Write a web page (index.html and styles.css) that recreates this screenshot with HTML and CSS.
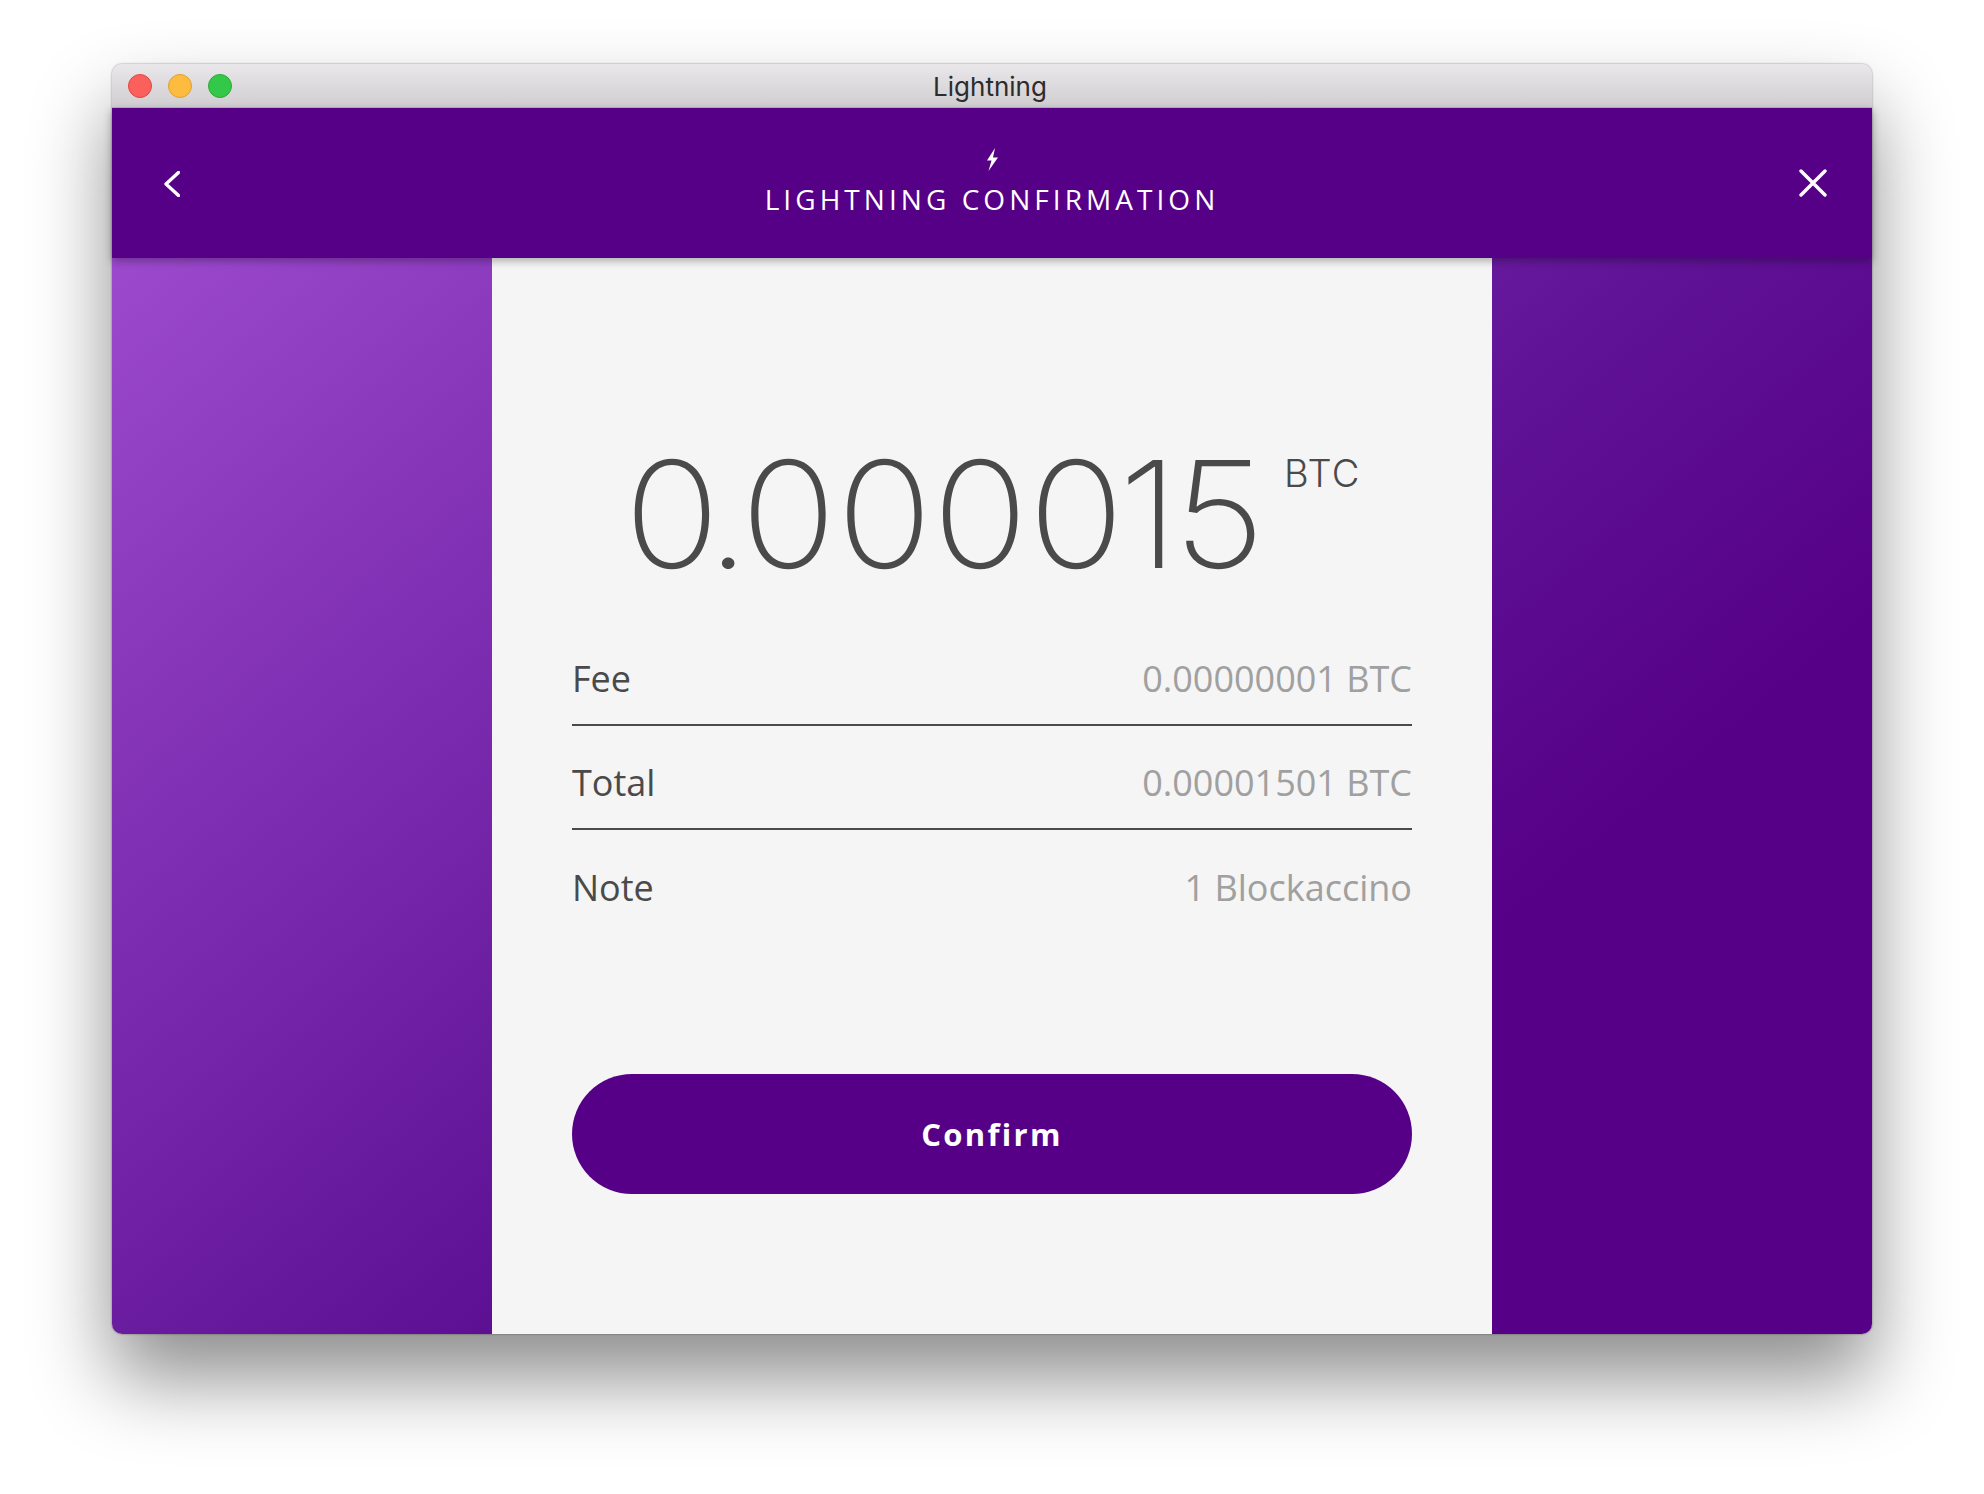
FILE: index.html
```html
<!DOCTYPE html>
<html lang="en">
<head>
    <meta charset="UTF-8">
    <title>Lightning</title>
    <link rel="stylesheet" href="styles.css">
</head>
<body>
    <div class="window">
        <div class="titlebar">
            <div class="lights">
                <span class="light red"></span>
                <span class="light yellow"></span>
                <span class="light green"></span>
            </div>
            <div class="window-title">Lightning</div>
        </div>

        <div class="navbar">
            <svg class="back-icon" width="16" height="26" viewBox="0 0 16 26">
                <path d="M14.5 1.5 L2 13 L14.5 24.5" />
            </svg>
            <div class="message">
                <svg class="bolt" width="12" height="23" viewBox="0 0 12 23">
                    <path d="M9 0 L1 12.5 H5.5 L2.5 23 L12 9.5 H7 Z" />
                </svg>
                <h1>LIGHTNING CONFIRMATION</h1>
            </div>
            <svg class="close-icon" width="28" height="28" viewBox="0 0 28 28">
                <path d="M2 2 L26 26 M26 2 L2 26" />
            </svg>
        </div>

        <div class="content">
            <div class="panel">
                <div class="amount">
                    <span class="value"><span class="tight-dot">0.</span>000<span class="tight-one">01</span>5</span>
                    <span class="unit">BTC</span>
                </div>
                <div class="rows">
                    <div class="row">
                        <span class="label">Fee</span>
                        <span class="data">0.00000001 BTC</span>
                    </div>
                    <div class="row">
                        <span class="label">Total</span>
                        <span class="data">0.00001501 BTC</span>
                    </div>
                    <div class="row">
                        <span class="label">Note</span>
                        <span class="data">1 Blockaccino</span>
                    </div>
                </div>
                <button class="confirm">Confirm</button>
            </div>
        </div>
    </div>
</body>
</html>
```

FILE: styles.css
```css
body {
    margin: 0;
    background-color: #ffffff;
    height: 1494px;
    overflow: hidden;
    padding: 64px 112px 0;
    box-sizing: border-box;
}

.window {
    width: 1760px;
    height: 1270px;
    border-radius: 10px;
    display: flex;
    flex-direction: column;
    box-shadow: 0 44px 80px rgba(0, 0, 0, 0.45), 0 0 2px rgba(0, 0, 0, 0.5);
}

.titlebar {
    height: 43px;
    flex-shrink: 0;
    display: flex;
    align-items: center;
    position: relative;
    border-radius: 10px 10px 0 0;
    border-bottom: 1px solid #b8b6b8;
    background-image: linear-gradient(to bottom, #e9e7e9 0%, #d0ced0 100%);
}

.lights {
    display: flex;
    gap: 16px;
    padding-left: 16px;
}

.light {
    width: 24px;
    height: 24px;
    border-radius: 50%;
    box-sizing: border-box;
}

.red {
    background-color: #fc605c;
    border: 1px solid #e2463f;
}

.yellow {
    background-color: #fdbc40;
    border: 1px solid #e1a029;
}

.green {
    background-color: #34c84a;
    border: 1px solid #2aac2f;
}

.window-title {
    position: absolute;
    left: 0;
    right: 4px;
    padding-top: 2px;
    text-align: center;
    font-family: "Inter", sans-serif;
    font-size: 26px;
    color: #2d2b2d;
}

.navbar {
    height: 150px;
    flex-shrink: 0;
    display: flex;
    align-items: center;
    justify-content: space-between;
    padding: 0 45px 0 52px;
    background-color: #560087;
    position: relative;
    z-index: 1;
    box-shadow: 0 3px 8px rgba(0, 0, 0, 0.3);
}

.back-icon {
    margin-top: 2px;
}

.back-icon path,
.close-icon path {
    fill: none;
    stroke: #ffffff;
    stroke-width: 3.4;
    stroke-linecap: round;
    stroke-linejoin: round;
}

.bolt path {
    fill: #ffffff;
}

.message {
    text-align: center;
    flex-grow: 1;
    margin-left: 5px;
    padding-bottom: 2px;
    color: #ffffff;
}

.bolt {
    display: block;
    margin: 0 auto 10px;
}

.message h1 {
    margin: 0;
    font-family: "Open Sans", sans-serif;
    font-size: 28px;
    font-weight: 400;
    line-height: 36px;
    letter-spacing: 4.05px;
}

.content {
    flex: 1;
    display: flex;
    justify-content: center;
    overflow: hidden;
    border-radius: 0 0 10px 10px;
    background-image: linear-gradient(140deg, #9c49cd 0%, #5f1295 52%, #560087 72%);
}

.panel {
    width: 1000px;
    box-sizing: border-box;
    padding: 0 80px;
    background-color: #f5f5f5;
}

.amount {
    display: flex;
    justify-content: center;
    align-items: flex-start;
    gap: 63px;
    padding-top: 183px;
    color: #4a4a4a;
    font-family: "Inter", sans-serif;
}

.value {
    font-size: 148px;
    font-weight: 200;
    line-height: 148px;
    transform: scaleX(1.073);
    transform-origin: left center;
}

.tight-dot {
    letter-spacing: -9px;
}

.tight-one {
    letter-spacing: -5.3px;
}

.unit {
    margin-top: 10px;
    font-size: 38px;
    font-weight: 300;
    line-height: 44px;
    letter-spacing: 1px;
}

.rows {
    margin-top: 33px;
    font-family: "Open Sans", sans-serif;
    font-size: 36px;
}

.row {
    height: 104px;
    box-sizing: border-box;
    padding-top: 10px;
    display: flex;
    justify-content: space-between;
    align-items: center;
    border-bottom: 2px solid #4a4a4a;
}

.row:last-child {
    border-bottom: none;
}

.label {
    color: #4a4a4a;
}

.data {
    color: #a0a0a0;
}

.confirm {
    display: block;
    width: 100%;
    height: 120px;
    margin-top: 140px;
    border: none;
    border-radius: 60px;
    background-color: #560087;
    color: #ffffff;
    font-family: "Open Sans", sans-serif;
    font-size: 31px;
    font-weight: 700;
    letter-spacing: 2.3px;
    cursor: pointer;
}
```
